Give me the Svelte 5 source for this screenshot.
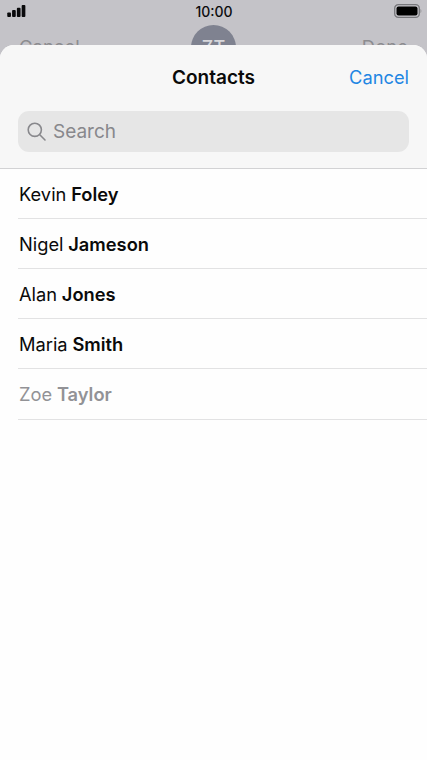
<script>
  const contacts = [
    { first: 'Kevin', last: 'Foley' },
    { first: 'Nigel', last: 'Jameson' },
    { first: 'Alan', last: 'Jones' },
    { first: 'Maria', last: 'Smith' },
    { first: 'Zoe', last: 'Taylor', dim: true }
  ];
</script>

<div class="page">
  <div class="backdrop">
    <div class="status">
      <svg class="signal" width="19" height="12" viewBox="0 0 20 13" fill="#0a0a0c">
        <rect x="0" y="8" width="4" height="5" rx="1" />
        <rect x="5.2" y="5.5" width="4" height="7.5" rx="1" />
        <rect x="10.4" y="3" width="4" height="10" rx="1" />
        <rect x="15.6" y="0" width="4" height="13" rx="1" />
      </svg>
      <span class="time">10:00</span>
      <svg class="battery" width="28" height="14" viewBox="0 0 28 14">
        <rect x="0.7" y="0.7" width="24.6" height="12.6" rx="3.6" fill="none" stroke="#77777b" stroke-width="1.3" />
        <rect x="2.5" y="2.5" width="21" height="9" rx="2" fill="#000" />
        <path d="M26.5 5 C27.6 5.3 27.6 8.7 26.5 9 Z" fill="#8a8a8e" />
      </svg>
    </div>
    <div class="nav">
      <span class="nav-text">Cancel</span>
      <div class="avatar">ZT</div>
      <span class="nav-text">Done</span>
    </div>
  </div>

  <div class="sheet">
    <header class="sheet-head">
      <div class="title-row">
        <h1>Contacts</h1>
        <button class="cancel">Cancel</button>
      </div>
      <div class="search">
        <svg width="20" height="20" viewBox="0 0 20 20" fill="none" stroke="#88888c" stroke-width="1.6" stroke-linecap="round">
          <circle cx="7.8" cy="7.8" r="6.6" />
          <path d="M12.8 12.8 L18 18" />
        </svg>
        <span>Search</span>
      </div>
    </header>
    <ul class="list">
      {#each contacts as c}
        <li class:dim={c.dim}>{c.first} <strong>{c.last}</strong></li>
      {/each}
    </ul>
  </div>
</div>

<style>
  :global(body) {
    margin: 0;
    font-family: Inter, "Liberation Sans", sans-serif;
  }
  .page {
    width: 427px;
    height: 760px;
    display: flex;
    flex-direction: column;
    overflow: hidden;
    background: #c4c3c8;
  }
  .backdrop {
    height: 45px;
    overflow: hidden;
    flex: none;
  }
  .status {
    height: 25px;
    padding: 0 20px 0 7px;
    display: flex;
    align-items: center;
    justify-content: space-between;
    box-sizing: border-box;
  }
  .signal {
    margin-top: -3px;
  }
  .battery {
    margin-top: -3px;
    margin-right: -15px;
  }
  .time {
    font-size: 14px;
    font-weight: 500;
    color: #0c0c0e;
    margin-top: -2px;
    margin-left: 8px;
  }
  .nav {
    display: flex;
    justify-content: space-between;
    align-items: flex-start;
    padding: 0 19px;
  }
  .nav-text {
    font-size: 18.5px;
    color: #8c8c90;
    margin-top: 11px;
    width: 70px;
  }
  .nav-text:last-child {
    text-align: right;
  }
  .avatar {
    width: 45px;
    height: 45px;
    border-radius: 50%;
    background: #7f8290;
    color: #d8d8dc;
    font-size: 18px;
    font-weight: 500;
    display: flex;
    align-items: center;
    justify-content: center;
  }
  .sheet {
    flex: 1;
    background: #fefefe;
    border-radius: 14px 14px 0 0;
    overflow: hidden;
  }
  .sheet-head {
    height: 124px;
    box-sizing: border-box;
    background: #f7f7f7;
    border-bottom: 1px solid #d2d2d4;
    padding: 0 18px;
  }
  .title-row {
    height: 66px;
    padding-bottom: 2px;
    box-sizing: border-box;
    display: flex;
    align-items: center;
    justify-content: center;
    position: relative;
  }
  h1 {
    margin: 0;
    font-size: 19px;
    font-weight: 600;
    color: #0a0a0a;
  }
  .cancel {
    position: absolute;
    right: 0;
    top: 50%;
    transform: translateY(-50%);
    margin-top: -1px;
    border: 0;
    padding: 0;
    background: none;
    font: inherit;
    font-size: 18.3px;
    color: #1f86e3;
  }
  .search {
    height: 41px;
    border-radius: 11px;
    background: #e6e6e6;
    display: flex;
    align-items: center;
    gap: 6px;
    padding-left: 9px;
    font-size: 19px;
    color: #88888c;
  }
  .list {
    list-style: none;
    margin: 0;
    padding: 0 0 0 18px;
  }
  li {
    height: 50px;
    box-sizing: border-box;
    border-bottom: 1px solid #e2e2e3;
    display: flex;
    align-items: center;
    gap: 0.26em;
    padding-left: 1px;
    font-size: 18.3px;
    color: #0a0a0a;
  }
  li:first-child {
    height: 50px;
  }
  li strong {
    font-weight: 600;
  }
  li.dim {
    color: #929296;
    height: 51px;
  }
</style>
